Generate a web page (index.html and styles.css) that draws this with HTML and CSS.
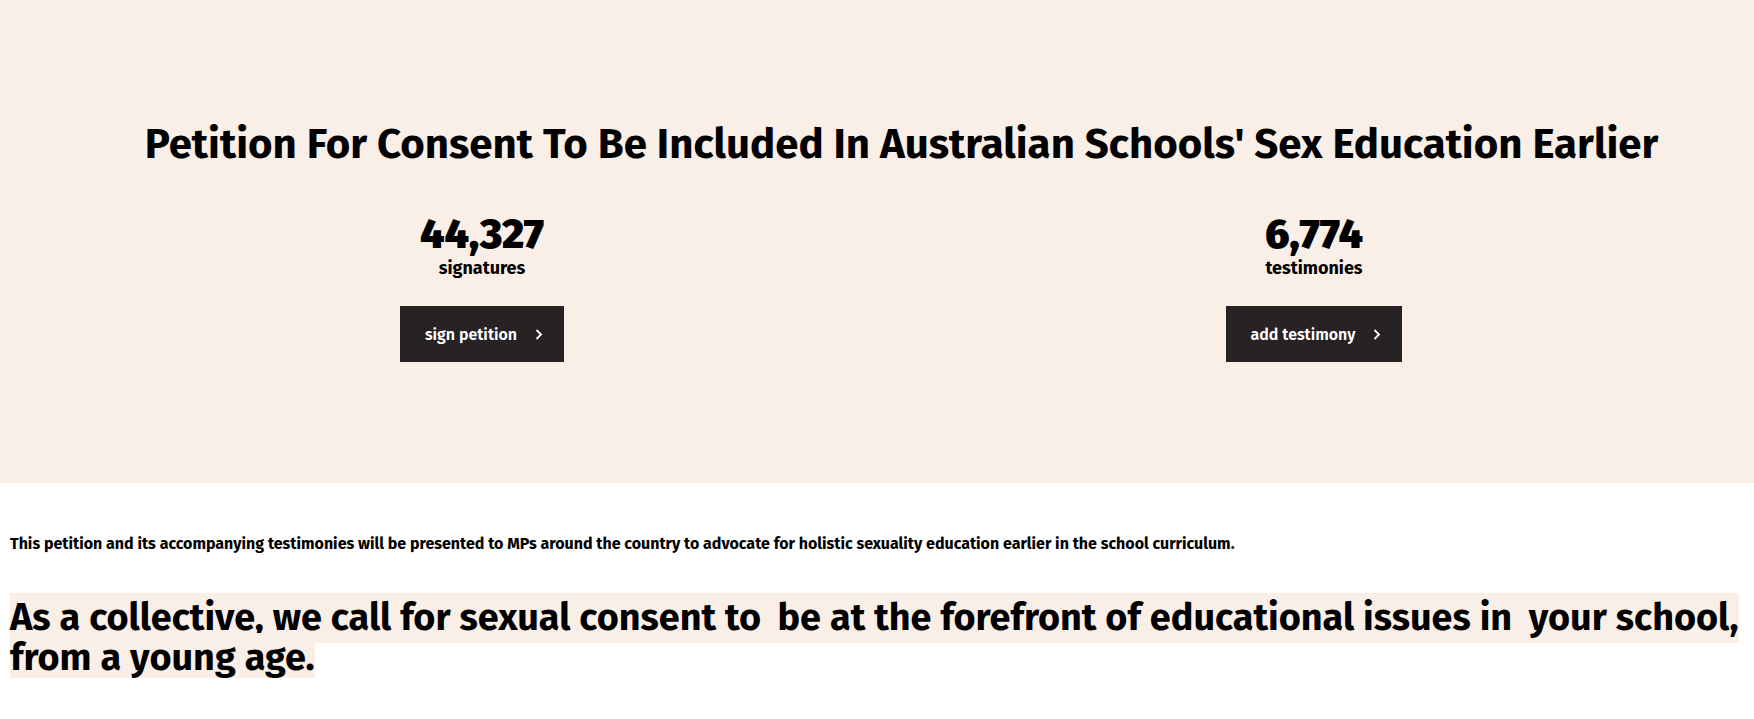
FILE: index.html
```html
<!DOCTYPE html>
<html>
<head>
    <title>Petition</title>
    <link rel="stylesheet" href="styles.css">
</head>
<body>
    <section class="hero">
        <h1 class="hero-title">Petition For Consent To Be Included In Australian Schools' Sex Education Earlier</h1>
        <div class="stats">
            <div class="stat">
                <div class="stat-count">44,327</div>
                <div class="stat-label">signatures</div>
                <a class="stat-button" href="#">sign petition
                    <svg width="8" height="11" viewBox="0 0 8 11"><path d="M1.5 1 L6 5.5 L1.5 10" fill="none" stroke="#fff" stroke-width="1.8"/></svg>
                </a>
            </div>
            <div class="stat">
                <div class="stat-count">6,774</div>
                <div class="stat-label">testimonies</div>
                <a class="stat-button" href="#">add testimony
                    <svg width="8" height="11" viewBox="0 0 8 11"><path d="M1.5 1 L6 5.5 L1.5 10" fill="none" stroke="#fff" stroke-width="1.8"/></svg>
                </a>
            </div>
        </div>
    </section>

    <section class="about">
        <p class="about-text">This petition and its accompanying testimonies will be presented to MPs around the country to advocate for holistic sexuality education earlier in the school curriculum.</p>
        <h2 class="about-call"><span>As a collective, we call for sexual consent to&thinsp; be at the forefront of educational issues in&thinsp; your school, from a young age.</span></h2>
    </section>
</body>
</html>
```

FILE: styles.css
```css
body {
    font-family: "Fira Sans", "Noto Sans", sans-serif;
    margin: 0;
    padding: 0;
    color: #000;
    background-color: #fff;
}
.hero {
    background-color: #faefe7;
    padding: 119px 24px 121px 66px;
}
.hero-title {
    margin: 0;
    padding-left: 7px;
    font-size: 42px;
    line-height: 50px;
    font-weight: 700;
    text-align: center;
}
.stats {
    display: grid;
    grid-template-columns: 1fr 1fr;
    margin-top: 43px;
}
.stat {
    display: flex;
    flex-direction: column;
    align-items: center;
}
.stat-count {
    font-size: 42px;
    line-height: 44px;
    font-weight: 900;
}
.stat-label {
    font-size: 18px;
    line-height: 25px;
    font-weight: 700;
}
.stat-button {
    display: flex;
    align-items: center;
    gap: 18px;
    height: 56px;
    margin-top: 25px;
    padding: 0 21px 0 25px;
    background-color: #272223;
    color: #fff;
    font-size: 16px;
    font-weight: 600;
    text-decoration: none;
}
.about {
    padding: 0 4px 0 10px;
}
.about-text {
    margin: 49px 0 0;
    font-size: 16px;
    line-height: 24px;
    font-weight: 700;
}
.about-call {
    margin: 42px 0 0;
    font-size: 37.8px;
    line-height: 40px;
    font-weight: 700;
}
.about-call span {
    background-color: #faefe7;
    padding: 2px 0 3px;
}
```
